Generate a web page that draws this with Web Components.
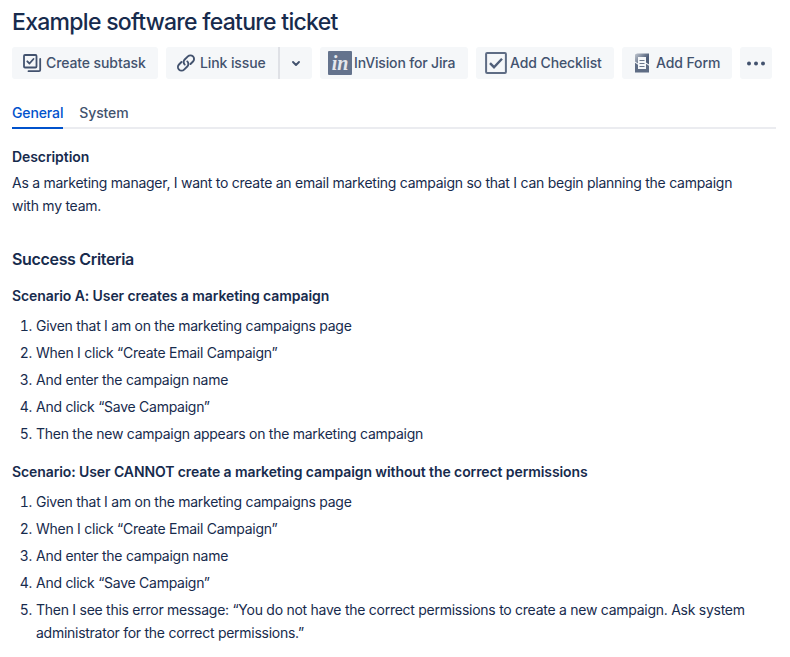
<!DOCTYPE html>
<html lang="en"><head><meta charset="utf-8"><title>Example software feature ticket</title>
<style>html,body{margin:0;background:#fff}body{font-family:Inter,"Liberation Sans",sans-serif;color:#172b4d}</style></head>
<body><ticket-page></ticket-page>
<script>
const icons={
subtask:'<svg width="20" height="20" viewBox="0 0 20 20" fill="none" stroke="#42526e" stroke-width="1.8" stroke-linecap="round" stroke-linejoin="round"><rect x="2" y="2" width="12.5" height="12.5" rx="1"/><path d="M5.3 8.3l2.2 2.2L11.5 6M18.2 6v11a1.2 1.2 0 0 1-1.2 1.2H6.5"/></svg>',
link:'<svg width="20" height="20" viewBox="0 0 20 20" fill="none" stroke="#42526e" stroke-width="1.9" stroke-linecap="round"><path d="M8.7 11.6a3.6 3.6 0 0 1 0-5.1l3.2-3.1a3.6 3.6 0 0 1 5.1 5.1l-2.5 2.5M11.3 8.4a3.6 3.6 0 0 1 0 5.1l-3.2 3.1a3.6 3.6 0 0 1-5.1-5.1l2.5-2.5"/></svg>',
chevron:'<svg width="10" height="7" viewBox="0 0 10 7" fill="none" stroke="#42526e" stroke-width="1.9" stroke-linecap="round" stroke-linejoin="round"><path d="M2 2l3 3 3-3"/></svg>',
check:'<svg width="22" height="22" viewBox="0 0 22 22" fill="none" stroke="#5e6c84" stroke-width="2"><rect x="1.1" y="1.1" width="19.8" height="19.8" rx="1"/><path stroke="#505f79" stroke-width="2.4" d="M5 11.2l4 4L17 6.7"/></svg>',
form:'<svg width="14" height="20" viewBox="0 0 14 20"><defs><linearGradient id="g" x1="0" y1="0" x2=".8" y2=".5"><stop stop-color="#c1c7d0"/><stop offset="1" stop-color="#505f79"/></linearGradient></defs><path fill="url(#g)" d="M0 1.5L2 .5h12v11l-3-2V4H3v6.5L0 8.5z"/><path fill="#5e6c84" d="M0 9.8l3 2V16h8v-5.2l3 2v6.7H0z"/><path fill="#f5f7f9" d="M3 4h8v12H3z"/><path stroke="#6b778c" stroke-width="1" d="M4.5 7.5h5M4.5 10.5h5M4.5 13.5h5"/></svg>',
more:'<svg width="18" height="5" viewBox="0 0 18 5" fill="#42526e"><circle cx="2" cy="2.5" r="2"/><circle cx="9" cy="2.5" r="2"/><circle cx="16" cy="2.5" r="2"/></svg>'};
function define(n,html){customElements.define(n,class extends HTMLElement{constructor(){super();this.attachShadow({mode:'open'}).innerHTML=typeof html==='function'?html(this):html}})}
define('ui-icon',e=>`<style>:host{display:flex;flex:none}svg{display:block}</style>${icons[e.getAttribute('name')]}`);
define('invision-logo','<style>:host{display:grid;place-items:center;width:24px;height:24px;background:#64738d;border-radius:1px;color:#e4e7ec;font:italic 700 20px/21px "Liberation Serif",serif}</style><span>in</span>');
define('tool-button','<style>:host{display:flex;align-items:center;box-sizing:border-box;height:32px;background:#f5f7f9;border-radius:3px;color:#42526e;font-size:14px;font-weight:500;letter-spacing:-.1px;white-space:nowrap;flex:none}::slotted(span){line-height:18px;padding-bottom:1px}</style><slot></slot>');
define('nav-tab','<style>:host{display:block;box-sizing:border-box;height:30px;font-size:14px;font-weight:500;line-height:28px;letter-spacing:-.12px;color:#42526e}:host([selected]){color:#0052cc;border-bottom:2px solid #0052cc}</style><slot></slot>');
define('ticket-scenario','<style>:host{display:block}.h{font-size:14px;font-weight:600;line-height:20px;letter-spacing:-.095px;margin-bottom:8px}</style><div class="h"><slot name="title"></slot></div><slot></slot>');
define('step-item','<style>:host{display:flex;font-size:14px;line-height:23px;letter-spacing:-.265px;margin-bottom:4px}.n{width:20px;text-align:right;margin-right:4px;flex:none;font-variant-numeric:tabular-nums}</style><span class="n"><slot name="n"></slot></span><span><slot></slot></span>');
define('ticket-page',`<style>:host{display:block;padding:8px 14px 0 12px}h1{font-size:23px;line-height:28px;font-weight:500;margin:0 0 11px;letter-spacing:-.71px}.bar{display:flex;gap:8px;height:32px}.split{display:flex}.tabs{display:flex;gap:16px;box-shadow:inset 0 -2px #ebecf0;height:30px;margin-top:20px}h2{font-size:14px;line-height:20px;font-weight:600;letter-spacing:-.08px;margin:18px 0 4px}p{font-size:14px;line-height:23px;letter-spacing:-.26px;margin:0}h3{font-size:16px;line-height:24px;font-weight:600;letter-spacing:-.33px;margin:30px 0 15px}.second{margin-top:17px}</style>
<h1>Example software feature ticket</h1>
<div class="bar"><tool-button style="width:146px;padding-left:10px;gap:4px"><ui-icon name="subtask"></ui-icon><span>Create subtask</span></tool-button>
<div class="split"><tool-button style="width:112px;padding-left:10px;gap:4px;border-radius:3px 0 0 3px"><ui-icon name="link"></ui-icon><span>Link issue</span></tool-button><tool-button style="width:34px;justify-content:center;border-left:2px solid #dfe1e6;border-radius:0 3px 3px 0"><ui-icon name="chevron"></ui-icon></tool-button></div>
<tool-button style="width:148px;padding-left:8px;gap:2px;letter-spacing:-.16px"><invision-logo></invision-logo><span>InVision for Jira</span></tool-button>
<tool-button style="width:138px;padding-left:9px;gap:3px"><ui-icon name="check"></ui-icon><span>Add Checklist</span></tool-button>
<tool-button style="width:110px;padding-left:13px;gap:7px"><ui-icon name="form"></ui-icon><span>Add Form</span></tool-button>
<tool-button style="width:32px;justify-content:center"><ui-icon name="more"></ui-icon></tool-button></div>
<div class="tabs"><nav-tab selected>General</nav-tab><nav-tab>System</nav-tab></div>
<h2>Description</h2><p>As a marketing manager, I want to create an email marketing campaign so that I can begin planning the campaign<br>with my team.</p><h3>Success Criteria</h3>
<ticket-scenario><span slot="title">Scenario A: User creates a marketing campaign</span>
<step-item><span slot="n">1.</span>Given that I am on the marketing campaigns page</step-item><step-item><span slot="n">2.</span>When I click “Create Email Campaign”</step-item><step-item><span slot="n">3.</span>And enter the campaign name</step-item><step-item><span slot="n">4.</span>And click “Save Campaign”</step-item><step-item><span slot="n">5.</span>Then the new campaign appears on the marketing campaign</step-item></ticket-scenario>
<ticket-scenario class="second"><span slot="title">Scenario: User CANNOT create a marketing campaign without the correct permissions</span>
<step-item><span slot="n">1.</span>Given that I am on the marketing campaigns page</step-item><step-item><span slot="n">2.</span>When I click “Create Email Campaign”</step-item><step-item><span slot="n">3.</span>And enter the campaign name</step-item><step-item><span slot="n">4.</span>And click “Save Campaign”</step-item><step-item><span slot="n">5.</span>Then I see this error message: “You do not have the correct permissions to create a new campaign. Ask system<br>administrator for the correct permissions.”</step-item></ticket-scenario>`);
</script></body></html>
